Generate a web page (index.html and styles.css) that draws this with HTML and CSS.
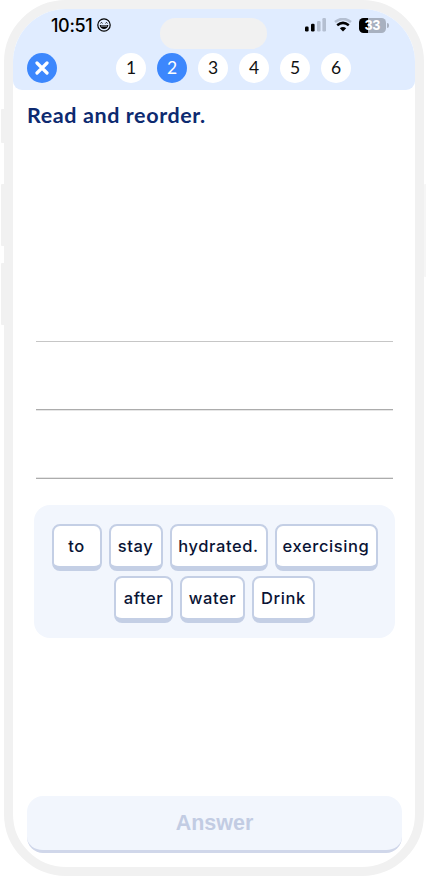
FILE: index.html
```html
<!DOCTYPE html>
<html lang="en">
<head>
  <meta charset="UTF-8" />
  <meta name="viewport" content="width=device-width, initial-scale=1.0"/>
  <title>Read and reorder</title>
  <link rel="stylesheet" href="styles.css">
</head>
<body>
  <div class="phone">
    <span class="side-button mute"></span>
    <span class="side-button volume-up"></span>
    <span class="side-button volume-down"></span>
    <span class="side-button power"></span>

    <div class="screen">
      <header class="header">
        <div class="island"></div>
        <div class="status-bar">
          <span class="time">10:51</span>
          <svg class="face" width="14" height="14" viewBox="0 0 14 14">
            <circle cx="7" cy="7" r="6.2" fill="none" stroke="#000" stroke-width="1.2"/>
            <path d="M3.5 5.3Q4.5 3.8 5.5 5.3M8.5 5.3Q9.5 3.8 10.5 5.3" fill="none" stroke="#000" stroke-width="1"/>
            <path d="M2.7 7H11.3C11 12.4 3 12.4 2.7 7Z" fill="#000"/>
            <path d="M3.9 8H10.1" stroke="#e0ecff" stroke-width=".8"/>
          </svg>
          <svg class="signal" width="22" height="14" viewBox="0 0 22 14">
            <rect x="0" y="8.5" width="3.6" height="5" rx="1.2"/>
            <rect x="6" y="5.8" width="3.6" height="7.7" rx="1.2"/>
            <rect x="12" y="3" width="3.6" height="10.5" rx="1.2" fill="#b4bfd1"/>
            <rect x="17.4" y="0" width="3.6" height="13.5" rx="1.2" fill="#b4bfd1"/>
          </svg>
          <svg class="wifi" width="18" height="14" viewBox="0 0 18 14">
            <path d="M1 4.1Q9-2.2 17 4.1" fill="none" stroke="#b4bfd1" stroke-width="2.6"/>
            <path d="M3.2 7.2Q9 2.6 14.8 7.2" fill="none" stroke="#000" stroke-width="2.5"/>
            <path d="M5.8 10.2Q9 7.6 12.2 10.2L9 13.4Z" fill="#000"/>
          </svg>
          <div class="battery"><span>33</span></div>
        </div>
        <nav class="steps">
          <button class="step close" aria-label="Close">
            <svg width="14" height="14" viewBox="0 0 14 14">
              <path d="M2 2L12 12M12 2L2 12" stroke="#fff" stroke-width="3.2" stroke-linecap="round"/>
            </svg>
          </button>
          <button class="step">1</button>
          <button class="step active">2</button>
          <button class="step">3</button>
          <button class="step">4</button>
          <button class="step">5</button>
          <button class="step">6</button>
        </nav>
      </header>

      <h1 class="title">Read and reorder.</h1>

      <div class="lines">
        <div class="line"></div>
        <div class="line"></div>
        <div class="line"></div>
      </div>

      <div class="word-bank">
        <div class="word-row">
          <button class="word to">to</button>
          <button class="word stay">stay</button>
          <button class="word hydrated">hydrated.</button>
          <button class="word exercising">exercising</button>
        </div>
        <div class="word-row">
          <button class="word after">after</button>
          <button class="word water">water</button>
          <button class="word drink">Drink</button>
        </div>
      </div>

      <button class="answer">Answer</button>
    </div>
  </div>
</body>
</html>
```
FILE: styles.css
```css
* {
  box-sizing: border-box;
}

body {
  margin: 0;
  background: #fff;
  font-family: "Inter", "Liberation Sans", sans-serif;
  overflow: hidden;
}

button {
  border: none;
  padding: 0;
  font-family: inherit;
  cursor: pointer;
}

.phone {
  position: relative;
  width: 420px;
  height: 876px;
  margin-left: 4px;
  border: 9px solid #f1f1f1;
  border-radius: 62px;
}

.side-button {
  position: absolute;
  left: -12px;
  width: 3px;
  background: #f1f1f1;
  border-radius: 1px 0 0 1px;
}

.mute {
  top: 100px;
  height: 34px;
}

.volume-up {
  top: 175px;
  height: 62px;
}

.volume-down {
  top: 254px;
  height: 62px;
}

.power {
  left: auto;
  right: -11px;
  top: 175px;
  height: 93px;
  width: 2px;
  background: #f6f6f6;
}

.screen {
  height: 858px;
  border-radius: 53px;
  display: flex;
  flex-direction: column;
}

.header {
  position: relative;
  height: 81px;
  background: #e0ecff;
  border-radius: 53px 53px 9px 9px;
}

.island {
  position: absolute;
  left: 147px;
  top: 9px;
  width: 107px;
  height: 31px;
  border-radius: 16px;
  background: #f1f1f1;
}

.status-bar {
  display: flex;
  align-items: center;
  height: 44px;
  padding: 0 29px 12px 38px;
}

.time {
  width: 43px;
  font-size: 18px;
  font-weight: 500;
  letter-spacing: -0.35px;
}

.face {
  margin-left: 3px;
}

.signal {
  margin-left: auto;
}

.wifi {
  margin-left: 7px;
}

.battery {
  position: relative;
  width: 27px;
  height: 15px;
  margin-left: 7px;
  border-radius: 4.5px;
  background: linear-gradient(90deg, #000 9px, #a8b1c0 9px);
  color: #fff;
  font-family: "Liberation Sans", sans-serif;
  font-size: 14px;
  font-weight: 700;
  line-height: 15px;
  text-align: center;
}

.battery::after {
  content: "";
  position: absolute;
  right: -3px;
  top: 5px;
  width: 2px;
  height: 5px;
  border-radius: 0 2px 2px 0;
  background: #a8b1c0;
}

.steps {
  display: flex;
  gap: 11px;
  padding-left: 14px;
}

.step {
  display: flex;
  align-items: center;
  justify-content: center;
  width: 30px;
  height: 30px;
  padding-bottom: 1px;
  border-radius: 50%;
  background: #fff;
  color: #111;
  font-family: "Lato", sans-serif;
  font-size: 17.5px;
}

.close {
  margin-right: 48px;
  padding-bottom: 0;
  background: #3c87fd;
}

.active {
  background: #3c87fd;
  color: #fff;
}

.title {
  margin: 11px 0 0 14px;
  color: #0d2a70;
  font-family: "Lato", sans-serif;
  font-size: 21.5px;
  font-weight: 700;
  line-height: 28px;
  letter-spacing: 0.6px;
}

.lines {
  display: flex;
  flex-direction: column;
  gap: 67px;
  margin: 212px 22px 0 23px;
}

.line {
  height: 1px;
  background: #acacac;
  box-shadow: 0 1px 0 #e6e6e6;
}

.line:first-child {
  background: #c6c6c6;
  box-shadow: none;
}

.line:last-child {
  margin-top: 1px;
  box-shadow: 0 -1px 0 #e6e6e6;
}

.word-bank {
  display: flex;
  flex-direction: column;
  gap: 5px;
  height: 133px;
  margin: 26px 20px 0 21px;
  padding-top: 19px;
  border-radius: 16px;
  background: #f2f6fd;
}

.word-row {
  display: flex;
  justify-content: center;
  gap: 7px;
}

.word {
  height: 47px;
  border: 2px solid #c4cfe5;
  border-bottom-width: 5px;
  border-radius: 8px;
  background: #fff;
  color: #0a1435;
  font-size: 16.5px;
  font-weight: 500;
  letter-spacing: 0.6px;
}

.to {
  width: 50px;
}

.stay {
  width: 54px;
}

.hydrated {
  width: 98px;
}

.exercising {
  width: 103px;
}

.after {
  width: 59px;
}

.water {
  width: 65px;
}

.drink {
  width: 63px;
}

.answer {
  height: 57px;
  margin: auto 13px 14px 14px;
  border-bottom: 3px solid #d0d7ea;
  border-radius: 16px;
  background: #f2f6fd;
  color: #c2cce3;
  font-family: "Liberation Sans", sans-serif;
  font-size: 21.5px;
  font-weight: 700;
}
```
